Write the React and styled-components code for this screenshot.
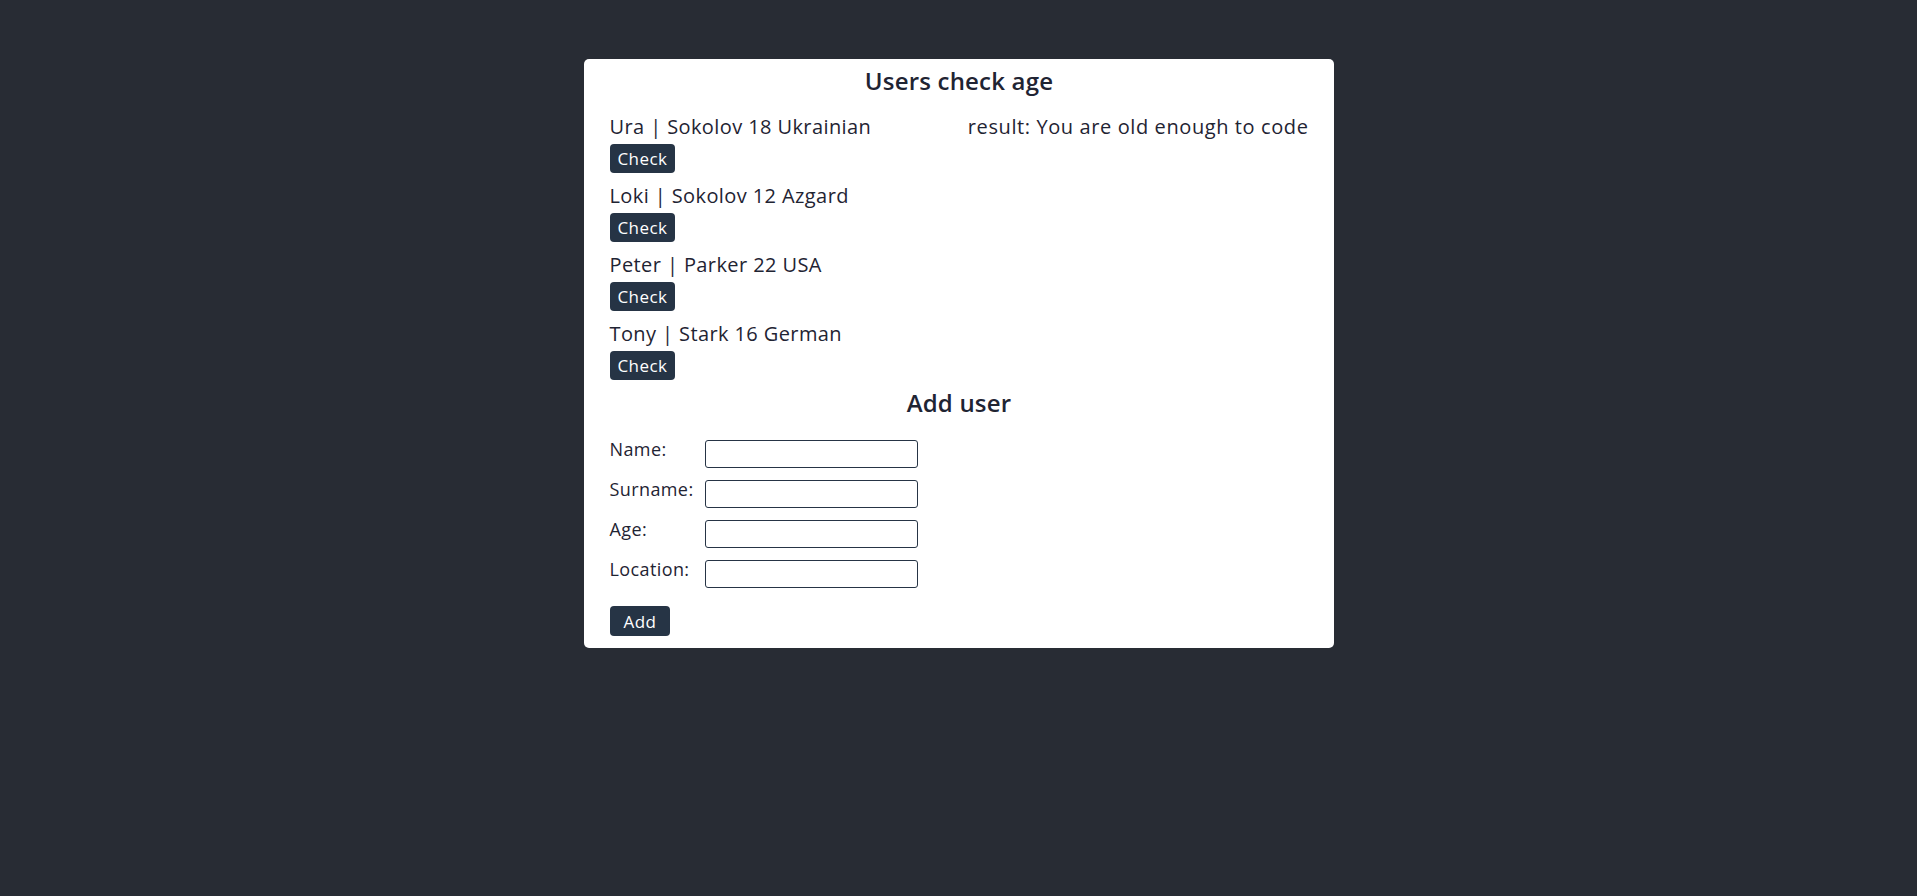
import React, { useState } from 'react';
import styled, { createGlobalStyle } from 'styled-components';

const GlobalStyle = createGlobalStyle`
  body {
    margin: 0;
    background-color: #282c34;
    font-family: "Open Sans", "Liberation Sans", sans-serif;
  }
`;

const Page = styled.div`
  min-height: 100vh;
  padding-top: 59px;
  box-sizing: border-box;
`;

const Card = styled.div`
  width: 750px;
  margin: 0 auto;
  background-color: #fff;
  border-radius: 5px;
  padding: 6px 25px 12px 26px;
  box-sizing: border-box;
  color: #1f2433;
`;

const Title = styled.h2`
  margin: 0;
  text-align: center;
  font-size: 24px;
  font-weight: 600;
  letter-spacing: 0.2px;
  line-height: 32px;
`;

const UserList = styled.div`
  display: flex;
  flex-direction: column;
  gap: 9px;
  margin-top: 16px;
`;

const UserItem = styled.div`
  display: flex;
  flex-direction: column;
  align-items: flex-start;
`;

const UserLine = styled.div`
  display: flex;
  justify-content: space-between;
  width: 100%;
  font-size: 20px;
  letter-spacing: 0.4px;
  line-height: 28px;
`;

const Result = styled.span`
  letter-spacing: 0.6px;
`;

const Button = styled.button`
  background-color: #263445;
  color: #fff;
  border: none;
  border-radius: 4px;
  font-family: inherit;
  font-size: 17px;
  letter-spacing: 0.4px;
  height: ${(p) => p.$height || 29}px;
  padding: 0 ${(p) => p.$padX || 8}px;
  margin-top: ${(p) => p.$top || 3}px;
  cursor: pointer;
`;

const FormTitle = styled(Title)`
  margin-top: 7px;
`;

const Form = styled.form`
  display: grid;
  grid-template-columns: 84px 213px;
  column-gap: 11px;
  row-gap: 12px;
  margin-top: 21px;
  align-items: start;
`;

const Label = styled.label`
  font-size: 18px;
  letter-spacing: 0.4px;
  line-height: 18px;
  white-space: nowrap;
`;

const Input = styled.input`
  box-sizing: border-box;
  width: 213px;
  height: 28px;
  border: 1px solid #263445;
  border-radius: 3px;
  font-family: inherit;
`;

const FormFooter = styled.div`
  grid-column: 1 / span 2;
`;

const initialUsers = [
  { name: 'Ura', surname: 'Sokolov', age: 18, location: 'Ukrainian' },
  { name: 'Loki', surname: 'Sokolov', age: 12, location: 'Azgard' },
  { name: 'Peter', surname: 'Parker', age: 22, location: 'USA' },
  { name: 'Tony', surname: 'Stark', age: 16, location: 'German' },
];

const App = () => {
  const [users, setUsers] = useState(initialUsers);
  const [results, setResults] = useState({ 0: 'You are old enough to code' });
  const [form, setForm] = useState({ name: '', surname: '', age: '', location: '' });

  const check = (i) => {
    setResults({
      ...results,
      [i]: users[i].age >= 18 ? 'You are old enough to code' : 'You are too young to code',
    });
  };

  const handleSubmit = (e) => {
    e.preventDefault();
    setUsers([...users, { ...form, age: Number(form.age) }]);
    setForm({ name: '', surname: '', age: '', location: '' });
  };

  const fields = [
    ['name', 'Name:'],
    ['surname', 'Surname:'],
    ['age', 'Age:'],
    ['location', 'Location:'],
  ];

  return (
    <Page>
      <GlobalStyle />
      <Card>
        <Title>Users check age</Title>
        <UserList>
          {users.map((u, i) => (
            <UserItem key={i}>
              <UserLine>
                <span>
                  {u.name} | {u.surname} {u.age} {u.location}
                </span>
                {results[i] && <Result>result: {results[i]}</Result>}
              </UserLine>
              <Button onClick={() => check(i)}>Check</Button>
            </UserItem>
          ))}
        </UserList>
        <FormTitle>Add user</FormTitle>
        <Form onSubmit={handleSubmit}>
          {fields.map(([key, label]) => (
            <React.Fragment key={key}>
              <Label htmlFor={key}>{label}</Label>
              <Input
                id={key}
                type="text"
                value={form[key]}
                onChange={(e) => setForm({ ...form, [key]: e.target.value })}
              />
            </React.Fragment>
          ))}
          <FormFooter>
            <Button type="submit" $height={30} $padX={14} $top={6}>
              Add
            </Button>
          </FormFooter>
        </Form>
      </Card>
    </Page>
  );
};

export default App;
